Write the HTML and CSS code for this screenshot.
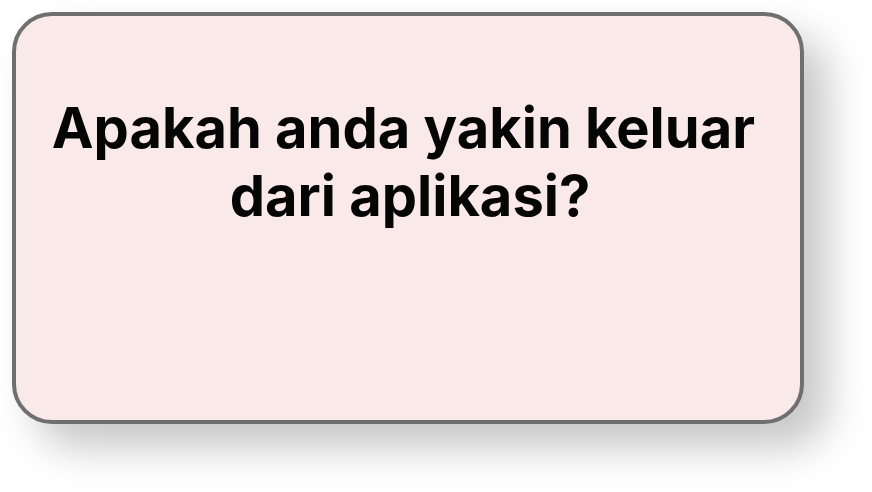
FILE: index.html
```html
<!DOCTYPE html>
<html lang="id">
<head>
<meta charset="utf-8">
<meta name="viewport" content="width=device-width, initial-scale=1">
<title>Keluar</title>
<link rel="stylesheet" href="styles.css">
</head>
<body>
<main class="dialog" role="dialog" aria-labelledby="question">
<h1 class="question" id="question">Apakah anda yakin keluar&nbsp;<br>dari aplikasi?</h1>
</main>
</body>
</html>
```
FILE: styles.css
```css
* {
  box-sizing: border-box;
}

body {
  min-height: 100vh;
  margin: 0;
  padding: 12px 68px 68px 12px;
  display: flex;
  background: #fff;
  font-family: Inter, sans-serif;
}

.dialog {
  flex: 1;
  padding: 78px 28px 78px 32px;
  border: 4px solid #706f6f;
  border-radius: 40px;
  background: #f9e9e8;
  box-shadow: 24px 24px 40px rgba(0, 0, 0, 0.22);
}

.question {
  margin: 0;
  color: #050505;
  font-size: 56px;
  font-weight: 700;
  line-height: 68px;
  text-align: center;
}
```
